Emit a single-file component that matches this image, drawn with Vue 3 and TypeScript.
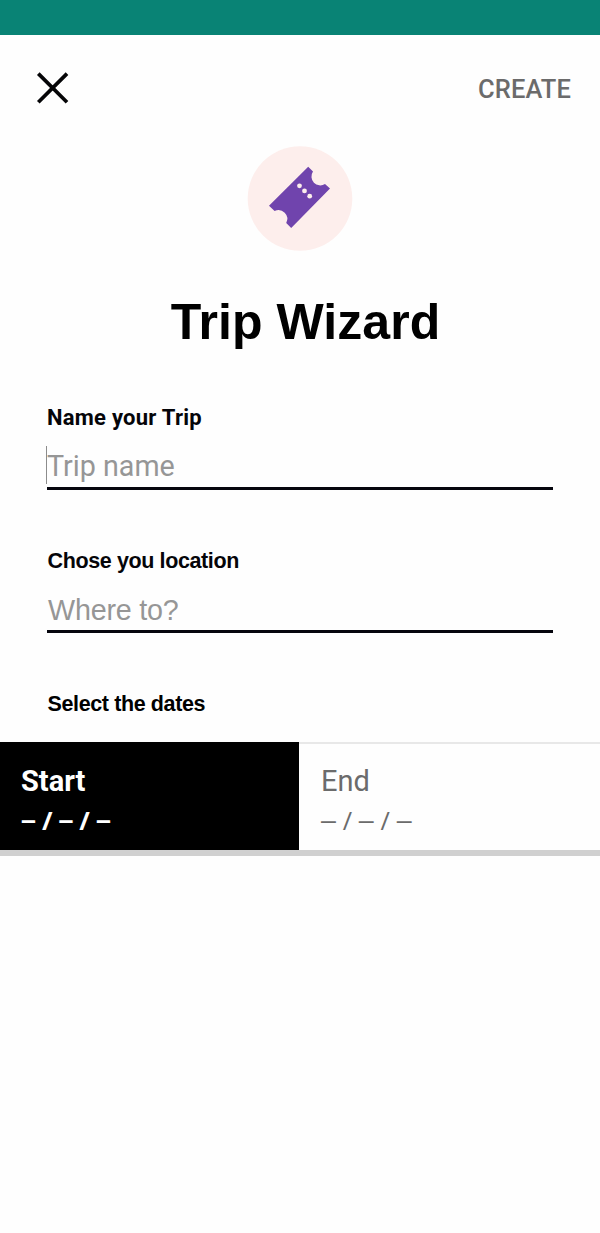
<script setup lang="ts">
import { ref } from 'vue'

type Side = 'start' | 'end'

const dates: { id: Side; title: string }[] = [
  { id: 'start', title: 'Start' },
  { id: 'end', title: 'End' },
]
const active = ref<Side>('start')
</script>

<template>
  <main class="screen">
    <div class="status-bar"></div>
    <header class="toolbar">
      <button class="close" aria-label="Close">
        <svg width="33" height="32" viewBox="0 0 33 32">
          <path d="M2.3 1.6 31 30.3M31 1.6 2.3 30.3" fill="none" stroke="#050507" stroke-width="3.7" />
        </svg>
      </button>
      <button class="create">CREATE</button>
    </header>

    <div class="badge">
      <svg width="106" height="106" viewBox="0 0 106 106">
        <circle cx="53" cy="52.5" r="52.3" fill="#fdeeec" />
        <path
          d="M61.2 20.8 L66 25.6 A8.8 8.8 0 0 0 78 38 L83 42.5 L44.2 82 L39.2 77 A8.8 8.8 0 0 0 27.6 65 L22 59.7 Z"
          fill="#7044ad"
        />
        <g fill="#fdeeec">
          <circle cx="52.5" cy="39.8" r="2.4" />
          <circle cx="57.5" cy="44.9" r="2.4" />
          <circle cx="62.7" cy="50.2" r="2.4" />
        </g>
      </svg>
    </div>
    <h1 class="title">Trip Wizard</h1>

    <section class="field name">
      <label class="label" for="trip-name">Name your Trip</label>
      <div id="trip-name" class="input focused">Trip name</div>
    </section>
    <section class="field place">
      <label class="label" for="location">Chose you location</label>
      <div id="location" class="input">Where to?</div>
    </section>

    <h2 class="dates-heading">Select the dates</h2>
    <div class="dates">
      <div
        v-for="d in dates"
        :key="d.id"
        class="date"
        :class="{ active: active === d.id }"
        @click="active = d.id"
      >
        <span class="date-title">{{ d.title }}</span>
        <span class="date-value">
          <span>–</span><span class="slash">/</span><span>–</span><span class="slash">/</span><span>–</span>
        </span>
      </div>
    </div>
  </main>
</template>

<style>
body {
  background: #fefefe;
}
</style>

<style scoped>
.screen {
  min-height: 1233px;
  background: #fefefe;
  color: #000;
  font-family: Roboto, 'Liberation Sans', sans-serif;
}
.status-bar {
  height: 35px;
  background: #098375;
}
.toolbar {
  display: flex;
  align-items: center;
  justify-content: space-between;
  height: 106px;
  padding: 0 29px 0 36px;
}
button {
  border: 0;
  padding: 0;
  background: none;
  font: inherit;
}
.badge svg,
.close svg {
  display: block;
}
.create {
  padding-top: 2px;
  color: #6b6b6b;
  font-size: 25.5px;
  font-weight: 500;
  line-height: 30px;
  letter-spacing: 0.1px;
}
.badge {
  display: flex;
  justify-content: center;
  padding-top: 5px;
}
.title {
  margin: 40px 0 0 11px;
  text-align: center;
  font: bold 50px/60px 'Liberation Sans', Arial, sans-serif;
  letter-spacing: 0.05px;
}
.field {
  margin: 0 47px;
  height: 143px;
}
.name {
  margin-top: 51px;
}
.label {
  display: block;
  color: #050509;
  font-size: 22px;
  font-weight: 700;
  line-height: 30px;
  letter-spacing: 0.25px;
}
.input {
  height: 43px;
  margin-top: 11px;
  border-bottom: 3px solid #05050d;
  color: #969696;
  font-size: 28.7px;
  line-height: 45px;
  position: relative;
}
.focused::before {
  content: '';
  position: absolute;
  left: -1px;
  top: 2px;
  width: 1px;
  height: 38px;
  background: #8c8c8c;
}
.place .label,
.place .input,
.dates-heading {
  font-family: 'Liberation Sans', Arial, sans-serif;
}
.place .label,
.dates-heading {
  font-size: 21.5px;
  letter-spacing: -0.38px;
}
.place .label {
  text-indent: 0.5px;
}
.place .input {
  text-indent: 1px;
  letter-spacing: -0.2px;
  line-height: 47px;
}
.dates-heading {
  margin: 0 0 0 47.5px;
  font-weight: 700;
  line-height: 30px;
}
.dates {
  display: grid;
  grid-template-columns: 299px 1fr;
  height: 108px;
  margin-top: 23px;
  border-bottom: 6px solid #d0d0d0;
}
.date {
  padding: 17px 22px 0;
  border-top: 2px solid #e8e8e8;
  color: #6b6b6b;
}
.date.active {
  padding-left: 21px;
  border-color: #000;
  background: #000;
  color: #fff;
  font-weight: 700;
}
.date-title {
  display: block;
  font-size: 29px;
  line-height: 40px;
}
.date-value {
  display: flex;
  gap: 6.8px;
  font-family: 'Liberation Sans', Arial, sans-serif;
  font-size: 26.8px;
  line-height: 39px;
}
.active .date-value {
  gap: 6px;
}
.slash {
  font-family: 'Open Sans', 'Noto Sans', sans-serif;
  font-size: 25.5px;
}
</style>
